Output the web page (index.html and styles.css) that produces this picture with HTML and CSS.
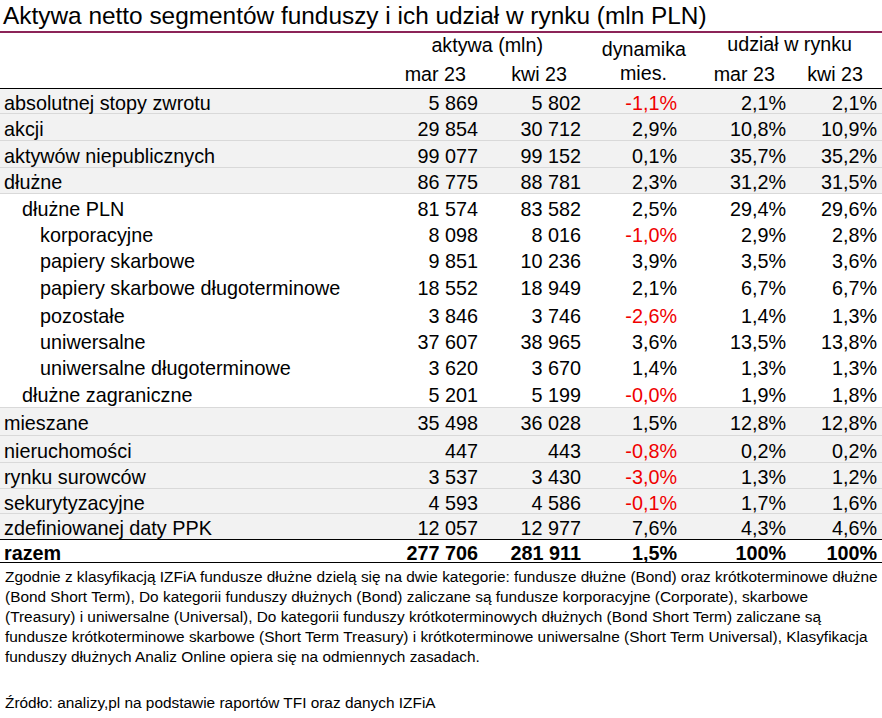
FILE: index.html
```html
<!DOCTYPE html>
<html lang="pl">
<head>
<meta charset="utf-8">
<title>Aktywa netto segmentów funduszy</title>
<link rel="stylesheet" href="styles.css">
</head>
<body>
<div class="page">
  <h1 class="title">Aktywa netto segmentów funduszy i ich udział w rynku (mln PLN)</h1>
  <div class="table">
    <div class="head">
      <div class="h-aktywa">aktywa (mln)</div>
      <div class="h-dyn1">dynamika</div>
      <div class="h-udz">udział w rynku</div>
      <div class="h-mar1">mar 23</div>
      <div class="h-kwi1">kwi 23</div>
      <div class="h-dyn2">mies.</div>
      <div class="h-mar2">mar 23</div>
      <div class="h-kwi2">kwi 23</div>
    </div>

    <div class="row main r1"><div class="lbl">absolutnej stopy zwrotu</div><div class="num">5 869</div><div class="num">5 802</div><div class="num neg">-1,1%</div><div class="num">2,1%</div><div class="num last">2,1%</div></div>
    <div class="row main r2"><div class="lbl">akcji</div><div class="num">29 854</div><div class="num">30 712</div><div class="num">2,9%</div><div class="num">10,8%</div><div class="num last">10,9%</div></div>
    <div class="row main r2"><div class="lbl">aktywów niepublicznych</div><div class="num">99 077</div><div class="num">99 152</div><div class="num">0,1%</div><div class="num">35,7%</div><div class="num last">35,2%</div></div>
    <div class="row main r4"><div class="lbl">dłużne</div><div class="num">86 775</div><div class="num">88 781</div><div class="num">2,3%</div><div class="num">31,2%</div><div class="num last">31,5%</div></div>

    <div class="row sub s27"><div class="lbl ind1">dłużne PLN</div><div class="num">81 574</div><div class="num">83 582</div><div class="num">2,5%</div><div class="num">29,4%</div><div class="num last">29,6%</div></div>
    <div class="row sub s25"><div class="lbl ind2">korporacyjne</div><div class="num">8 098</div><div class="num">8 016</div><div class="num neg">-1,0%</div><div class="num">2,9%</div><div class="num last">2,8%</div></div>
    <div class="row sub s27"><div class="lbl ind2">papiery skarbowe</div><div class="num">9 851</div><div class="num">10 236</div><div class="num">3,9%</div><div class="num">3,5%</div><div class="num last">3,6%</div></div>
    <div class="row sub s28"><div class="lbl ind2">papiery skarbowe długoterminowe</div><div class="num">18 552</div><div class="num">18 949</div><div class="num">2,1%</div><div class="num">6,7%</div><div class="num last">6,7%</div></div>
    <div class="row sub s27"><div class="lbl ind2">pozostałe</div><div class="num">3 846</div><div class="num">3 746</div><div class="num neg">-2,6%</div><div class="num">1,4%</div><div class="num last">1,3%</div></div>
    <div class="row sub s26"><div class="lbl ind2">uniwersalne</div><div class="num">37 607</div><div class="num">38 965</div><div class="num">3,6%</div><div class="num">13,5%</div><div class="num last">13,8%</div></div>
    <div class="row sub s26"><div class="lbl ind2">uniwersalne długoterminowe</div><div class="num">3 620</div><div class="num">3 670</div><div class="num">1,4%</div><div class="num">1,3%</div><div class="num last">1,3%</div></div>
    <div class="row sub s27"><div class="lbl ind1">dłużne zagraniczne</div><div class="num">5 201</div><div class="num">5 199</div><div class="num neg">-0,0%</div><div class="num">1,9%</div><div class="num last">1,8%</div></div>

    <div class="row main first m29"><div class="lbl">mieszane</div><div class="num">35 498</div><div class="num">36 028</div><div class="num">1,5%</div><div class="num">12,8%</div><div class="num last">12,8%</div></div>
    <div class="row main m27"><div class="lbl">nieruchomości</div><div class="num">447</div><div class="num">443</div><div class="num neg">-0,8%</div><div class="num">0,2%</div><div class="num last">0,2%</div></div>
    <div class="row main m26"><div class="lbl">rynku surowców</div><div class="num">3 537</div><div class="num">3 430</div><div class="num neg">-3,0%</div><div class="num">1,3%</div><div class="num last">1,2%</div></div>
    <div class="row main m25"><div class="lbl">sekurytyzacyjne</div><div class="num">4 593</div><div class="num">4 586</div><div class="num neg">-0,1%</div><div class="num">1,7%</div><div class="num last">1,6%</div></div>
    <div class="row main nob m25"><div class="lbl">zdefiniowanej daty PPK</div><div class="num">12 057</div><div class="num">12 977</div><div class="num">7,6%</div><div class="num">4,3%</div><div class="num last">4,6%</div></div>

    <div class="row total"><div class="lbl">razem</div><div class="num">277 706</div><div class="num">281 911</div><div class="num">1,5%</div><div class="num">100%</div><div class="num last">100%</div></div>
  </div>

  <p class="note">Zgodnie z klasyfikacją IZFiA fundusze dłużne dzielą się na dwie kategorie: fundusze dłużne (Bond) oraz krótkoterminowe dłużne<br>(Bond Short Term), Do kategorii funduszy dłużnych (Bond) zaliczane są fundusze korporacyjne (Corporate), skarbowe<br>(Treasury) i uniwersalne (Universal), Do kategorii funduszy krótkoterminowych dłużnych (Bond Short Term) zaliczane są<br>fundusze krótkoterminowe skarbowe (Short Term Treasury) i krótkoterminowe uniwersalne (Short Term Universal), Klasyfikacja<br>funduszy dłużnych Analiz Online opiera się na odmiennych zasadach.</p>
  <p class="source">Źródło: analizy,pl na podstawie raportów TFI oraz danych IZFiA</p>
</div>
</body>
</html>
```

FILE: styles.css
```css
html, body {
  margin: 0;
  padding: 0;
  background: #ffffff;
}

body {
  font-family: "Liberation Sans", Arial, sans-serif;
  color: #000000;
  width: 882px;
  height: 718px;
  overflow: hidden;
}

.page {
  width: 882px;
}

.title {
  margin: 0;
  padding: 0 0 0 3px;
  height: 31px;
  font-size: 24.4px;
  font-weight: normal;
  line-height: 32px;
  border-bottom: 2px solid #8c2458;
  white-space: nowrap;
}

.table {
  width: 882px;
}

.head {
  display: grid;
  grid-template-columns: 390px 90px 103px 96px 109px 94px;
  grid-template-rows: 24px 31px;
  height: 55px;
  border-bottom: 1px solid #000000;
  font-size: 19.7px;
  line-height: 18px;
  white-space: nowrap;
}

.head > div {
  justify-self: end;
}

.h-aktywa { grid-column: 2 / 4; grid-row: 1; margin-right: 40px; align-self: end; margin-bottom: 3px; }
.h-dyn1 { grid-column: 4; grid-row: 1; margin-right: -7px; align-self: end; margin-bottom: -1px; }
.h-udz { grid-column: 5 / 7; grid-row: 1; margin-right: 30px; align-self: end; margin-bottom: 4px; }
.h-mar1 { grid-column: 2; grid-row: 2; margin-right: 14px; align-self: center; margin-top: 3px; }
.h-kwi1 { grid-column: 3; grid-row: 2; margin-right: 16px; align-self: center; margin-top: 3px; }
.h-dyn2 { grid-column: 4; grid-row: 2; margin-right: 12px; align-self: center; }
.h-mar2 { grid-column: 5; grid-row: 2; margin-right: 13px; align-self: center; margin-top: 3px; }
.h-kwi2 { grid-column: 6; grid-row: 2; margin-right: 19px; align-self: center; margin-top: 3px; }

.row {
  display: grid;
  grid-template-columns: 390px 90px 103px 96px 109px 94px;
  align-items: center;
  box-sizing: border-box;
  font-size: 19.8px;
  line-height: 22px;
  white-space: nowrap;
  padding-top: 2px;
}

.row .lbl {
  padding-left: 4px;
}

.row .num {
  text-align: right;
  padding-right: 2px;
}

.row .num.last {
  padding-right: 5px;
}

.neg {
  color: #f00000;
}

.main {
  background: #f2f2f2;
  border-bottom: 1px solid #d9d9d9;
  padding-top: 3px;
}

.main.first {
  border-top: 1px solid #d9d9d9;
}

.main.nob {
  border-bottom: none;
}

.r1 { height: 25px; }
.r2 { height: 27px; }
.r4 { height: 26px; }

.sub {
  background: #ffffff;
}

.s25 { height: 25px; }
.s26 { height: 26px; }
.s27 { height: 27px; }
.s28 { height: 28px; }

.m25 { height: 25px; }
.m26 { height: 26px; }
.m27 { height: 27px; }
.m29 { height: 29px; }

.ind1 { padding-left: 22px !important; }
.ind2 { padding-left: 40px !important; }

.total {
  height: 24px;
  font-weight: bold;
  border-top: 1px solid #000000;
  border-bottom: 1px solid #000000;
}

.note {
  margin: 4px 0 0 0;
  padding-left: 5px;
  font-size: 15.4px;
  line-height: 20px;
  white-space: nowrap;
}

.source {
  margin: 26px 0 0 0;
  padding-left: 5px;
  font-size: 15.4px;
  line-height: 20px;
  white-space: nowrap;
}
```
